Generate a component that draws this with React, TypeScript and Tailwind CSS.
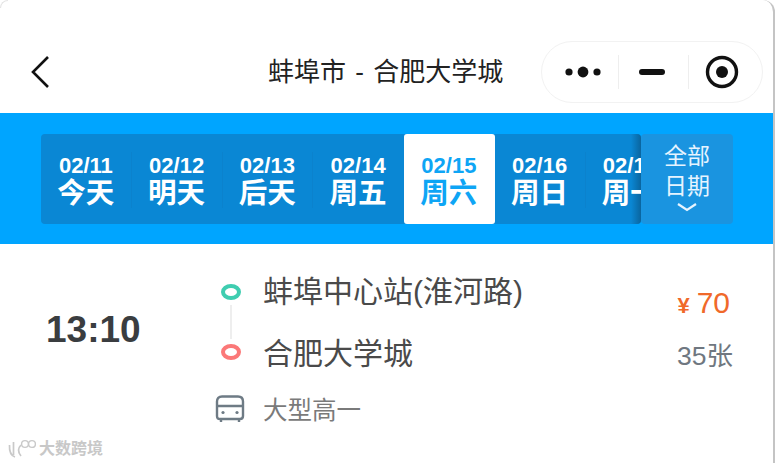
const CN = { fontFamily: '"Liberation Sans", "Noto Sans CJK SC", sans-serif' };

const days = [
  ["02/11", "今天"],
  ["02/12", "明天"],
  ["02/13", "后天"],
  ["02/14", "周五"],
  ["02/15", "周六"],
  ["02/16", "周日"],
  ["02/17", "周一"],
];

function Day({ d, w, active, last }: { d: string; w: string; active: boolean; last: boolean }) {
  return (
    <div className={`relative flex h-[90px] w-[90.75px] shrink-0 flex-col items-center justify-center rounded-[3px] pt-[6px] pr-[1px] ${active ? "bg-white text-[#0ea5f5]" : "text-white"}`}>
      <div className="text-[22px] leading-[24px] font-bold whitespace-nowrap">{d}</div>
      <div className="text-[28.5px] leading-[31px] font-bold whitespace-nowrap">{w}</div>
      {!active && !last && <div className="absolute top-[18px] right-0 h-[56px] w-px bg-[#0b82cd]" />}
    </div>
  );
}

export default function App() {
  return (
    <div style={CN} className="relative flex h-[463px] w-[775px] flex-col overflow-hidden bg-white">
      <div className="flex h-[113px] shrink-0 items-end bg-white pr-[11px] pb-[11px]">
        <div className="flex h-[61px] w-full items-center">
          <svg width="24" height="36" viewBox="0 0 24 36" className="ml-[29px] shrink-0">
            <path d="M19 3 L4 18 L19 33" fill="none" stroke="#111" strokeWidth="2.6" />
          </svg>
          <div className="ml-[215px] w-[263px] text-[26px] leading-none whitespace-nowrap text-[#222]">蚌埠市<span className="mx-[2px]"> - </span>合肥大学城</div>
          <div className="ml-[10px] flex h-[62px] w-[222px] shrink-0 items-center rounded-full border border-[#f2f2f2]">
            <svg width="38" height="14" viewBox="0 0 38 14" className="ml-[22px] shrink-0">
              <circle cx="5" cy="7" r="3.6" fill="#111" /><circle cx="19" cy="7" r="5.4" fill="#111" /><circle cx="33" cy="7" r="3.6" fill="#111" />
            </svg>
            <div className="ml-[16px] h-[34px] w-px bg-[#eeeeee]" />
            <div className="ml-[20px] h-[6px] w-[26px] rounded-full bg-[#111]" />
            <div className="ml-[23px] h-[34px] w-px bg-[#eeeeee]" />
            <svg width="34" height="34" viewBox="0 0 34 34" className="ml-[16px] shrink-0">
              <circle cx="17" cy="17" r="14.5" fill="none" stroke="#111" strokeWidth="3.4" /><circle cx="17" cy="17" r="6" fill="#111" />
            </svg>
          </div>
        </div>
      </div>

      <div className="flex h-[131px] shrink-0 items-center bg-[#00a5ff] pl-[41px]">
        <div className="relative flex h-[90px] w-[600px] overflow-hidden rounded-[4px] bg-[#0a87d4]">
          <div className="absolute top-0 right-0 bottom-0 w-[10px] bg-gradient-to-r from-transparent to-[#0a659f]" />
          {days.map(([d, w], i) => <Day key={d} d={d} w={w} active={i === 4} last={i === 3 || i === 4 || i === 6} />)}
        </div>
        <div className="flex h-[90px] w-[92px] flex-col items-center rounded-[4px] bg-[#1a94e0] pt-[8px] text-[#e6f4ff]">
          <div className="text-[23px] leading-[29px] font-normal">全部</div>
          <div className="text-[23px] leading-[30px] font-normal">日期</div>
          <svg width="22" height="10" viewBox="0 0 22 10" className="mt-[1px]"><path d="M2 2 L11 8 L20 2" fill="none" stroke="#e6f4ff" strokeWidth="2.2" /></svg>
        </div>
      </div>

      <div className="flex flex-1 items-start pt-[28px]">
        <div className="mt-[36px] ml-[46px] w-[169px] shrink-0 text-[37px] leading-[44px] font-bold text-[#3a3d40]">13:10</div>
        <div className="flex flex-col">
          <div className="flex items-start">
            <div className="mr-[16px] flex w-[32px] flex-col items-center pt-[12px]">
              <div className="h-[16px] w-[20px] rounded-[50%] border-[4px] border-[#3fcdb0]" />
              <div className="my-[5px] h-[34px] w-[2px] bg-[#eeeeee]" />
              <div className="h-[16px] w-[20px] rounded-[50%] border-[4px] border-[#fb7878]" />
            </div>
            <div className="text-[30px] text-[#4a4a4a]">
              <div className="h-[62px] leading-[40px] whitespace-nowrap">蚌埠中心站(淮河路)</div>
              <div className="leading-[40px] whitespace-nowrap">合肥大学城</div>
            </div>
          </div>
          <div className="mt-[20px] flex items-start">
            <div className="mr-[18px] w-[30px]">
              <svg width="30" height="30" viewBox="0 0 30 30" className="block">
                <path d="M7 2.5 H23 Q28 2.5 28 7.5 V22 Q28 25 25 25 H5 Q2 25 2 22 V7.5 Q2 2.5 7 2.5 Z M2 12 H28 M6 25 V28 M24 25 V28" fill="none" stroke="#6e7b85" strokeWidth="2.4" />
                <circle cx="8" cy="18.5" r="1.6" fill="#6e7b85" /><circle cx="22" cy="18.5" r="1.6" fill="#6e7b85" />
              </svg>
            </div>
            <div className="mt-[2px] text-[24.5px] leading-[30px] whitespace-nowrap text-[#7a7a7a]">大型高一</div>
          </div>
        </div>
        <div className="ml-auto flex flex-col items-end pt-[9px] pr-[42px]">
          <div className="mr-[3px] flex items-baseline gap-[7px] text-[#f0692a]">
            <span className="text-[22px] font-bold">¥</span>
            <span className="text-[30px] leading-[44px]">70</span>
          </div>
          <div className="mt-[11px] text-[26.5px] leading-[40px] text-[#6f7780]">35张</div>
        </div>
      </div>

      <div className="absolute bottom-[4px] left-[8px] flex items-center gap-[3px] text-[#c8c8c8]">
        <svg width="28" height="20" viewBox="0 0 28 20">
          <path d="M1.5 6 Q1 16 7 18 M5.5 3 V16 M13 6 Q8 11 13 17" fill="none" stroke="#c9c9c9" strokeWidth="1.7" />
          <circle cx="17" cy="5" r="3.4" fill="none" stroke="#c9c9c9" strokeWidth="1.4" /><circle cx="24" cy="5" r="3.4" fill="none" stroke="#c9c9c9" strokeWidth="1.4" />
        </svg>
        <span className="text-[16px] leading-[20px] font-bold">大数跨境</span>
      </div>
      <div className="absolute top-0 right-0 bottom-0 w-[12px] rounded-tr-[12px] border-r-[2px] border-[#c4c4c4]" />
      <div className="absolute top-0 left-0 h-[8px] w-[8px] rounded-tl-[8px] border-t border-l border-[#e4e4e4]" />
    </div>
  );
}
